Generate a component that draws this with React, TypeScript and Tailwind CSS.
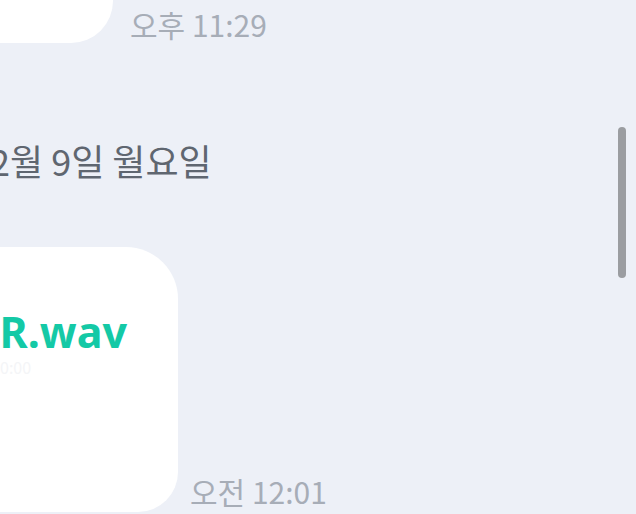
const font = { fontFamily: '"Noto Sans CJK KR", "Noto Sans", sans-serif' }

const App = () => {
    return (
        <div className="relative w-[636px] h-[514px] overflow-hidden bg-[#edf0f7]" style={font}>
            <div className="flex flex-col">
                <div className="flex items-end gap-[17px] mt-[-60px]">
                    <div className="w-[113px] h-[103px] bg-white rounded-br-[42px]"></div>
                    <span className="text-[30px] leading-[38px] text-[#a7adb7]">오후 11:29</span>
                </div>

                <div className="mt-[94px] ml-[-10px] text-[36px] leading-[46px] text-[#5f6670]">2월 9일 월요일</div>

                <div className="flex items-end gap-[12px] mt-[64px]">
                    <div className="w-[178px] h-[265px] bg-white rounded-tr-[52px] rounded-br-[40px] flex flex-col items-end pr-[51px] pt-[63px]">
                        <span className="text-[43px] leading-[44px] font-bold text-[#14c9a6] whitespace-nowrap" style={{ fontFamily: '"Noto Sans", sans-serif' }}>R.wav</span>
                        <span className="mt-[4px] text-[16px] leading-[18px] text-[#f4f5f7] self-start">0:00</span>
                    </div>
                    <span className="text-[30px] leading-[38px] text-[#a7adb7] mb-[2px]">오전 12:01</span>
                </div>
            </div>

            <div className="absolute left-[618px] top-[127px] w-[8px] h-[151px] rounded-full bg-[#9b9da1]"></div>
        </div>
    )
}

export default App
